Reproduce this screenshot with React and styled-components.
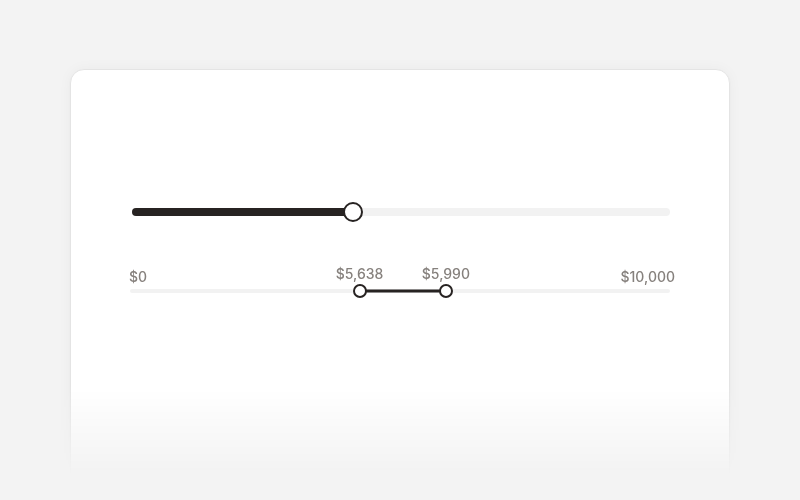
import React from "react";
import styled, { createGlobalStyle } from "styled-components";

const GlobalStyle = createGlobalStyle`
	html, body {
		margin: 0;
		background: #f3f3f3;
		font-family: Inter, "Noto Sans", sans-serif;
	}
`;

const INK = "#272322";

const Stage = styled.div`
	height: 500px;
	box-sizing: border-box;
	padding: 69px 70px 0;
	overflow: hidden;
	-webkit-mask-image: linear-gradient(to bottom, #000 77%, transparent 95%);
	mask-image: linear-gradient(to bottom, #000 77%, transparent 95%);
`;

const Card = styled.div`
	height: 440px;
	box-sizing: border-box;
	background: #fff;
	border: 1px solid #e4e4e4;
	border-radius: 14px;
	box-shadow: 0 1px 3px rgba(0, 0, 0, 0.04), 0 0 14px rgba(0, 0, 0, 0.04);
	padding: 132px 59px 0;
	display: flex;
	flex-direction: column;
`;

const SliderRow = styled.div`
	height: 20px;
	display: flex;
	align-items: center;
	padding-left: 2px;
`;

const Track = styled.div`
	position: relative;
	flex: 1;
	height: ${(p) => p.$h}px;
	border-radius: ${(p) => p.$h / 2}px;
	background: #f2f2f2;
`;

const Fill = styled.div`
	position: absolute;
	top: 0;
	bottom: 0;
	left: 0;
	border-radius: inherit;
	background: ${INK};
`;

const RangeFill = styled.div`
	position: absolute;
	top: 50%;
	height: 3px;
	transform: translateY(-50%);
	background: ${INK};
`;

const Thumb = styled.div`
	position: absolute;
	top: 50%;
	width: ${(p) => p.$size}px;
	height: ${(p) => p.$size}px;
	box-sizing: border-box;
	border-radius: 50%;
	background: #fff;
	border: 2px solid ${INK};
	transform: translate(-50%, -50%);
`;

const RangeBlock = styled.div`
	margin-top: 45px;
	display: flex;
	flex-direction: column;
`;

const EndLabels = styled.div`
	display: flex;
	justify-content: space-between;
	margin-right: -5px;
	margin-left: -1px;
	font-size: 14px;
	font-weight: 500;
	line-height: 20px;
	color: #86817d;
`;

const RangeRow = styled.div`
	display: flex;
	margin-top: 2px;
`;

const ValueLabel = styled.span`
	position: absolute;
	bottom: calc(100% + 5px);
	transform: translateX(-50%);
	font-size: 14px;
	font-weight: 500;
	line-height: 20px;
	color: #86817d;
	white-space: nowrap;
`;

const single = 0.41;
const range = [0.425, 0.585];

export default function App() {
	return (
		<>
			<GlobalStyle />
			<Stage>
				<Card>
					<SliderRow>
						<Track $h={8}>
							<Fill style={{ width: `${single * 100}%` }} />
							<Thumb $size={20} style={{ left: `${single * 100}%` }} />
						</Track>
					</SliderRow>
					<RangeBlock>
						<EndLabels>
							<span>$0</span>
							<span>$10,000</span>
						</EndLabels>
						<RangeRow>
							<Track $h={4}>
								<RangeFill
									style={{
										left: `${range[0] * 100}%`,
										width: `${(range[1] - range[0]) * 100}%`,
									}}
								/>
								<ValueLabel style={{ left: `${range[0] * 100}%` }}>$5,638</ValueLabel>
								<ValueLabel style={{ left: `${range[1] * 100}%` }}>$5,990</ValueLabel>
								<Thumb $size={14} style={{ left: `${range[0] * 100}%` }} />
								<Thumb $size={14} style={{ left: `${range[1] * 100}%` }} />
							</Track>
						</RangeRow>
					</RangeBlock>
				</Card>
			</Stage>
		</>
	);
}
